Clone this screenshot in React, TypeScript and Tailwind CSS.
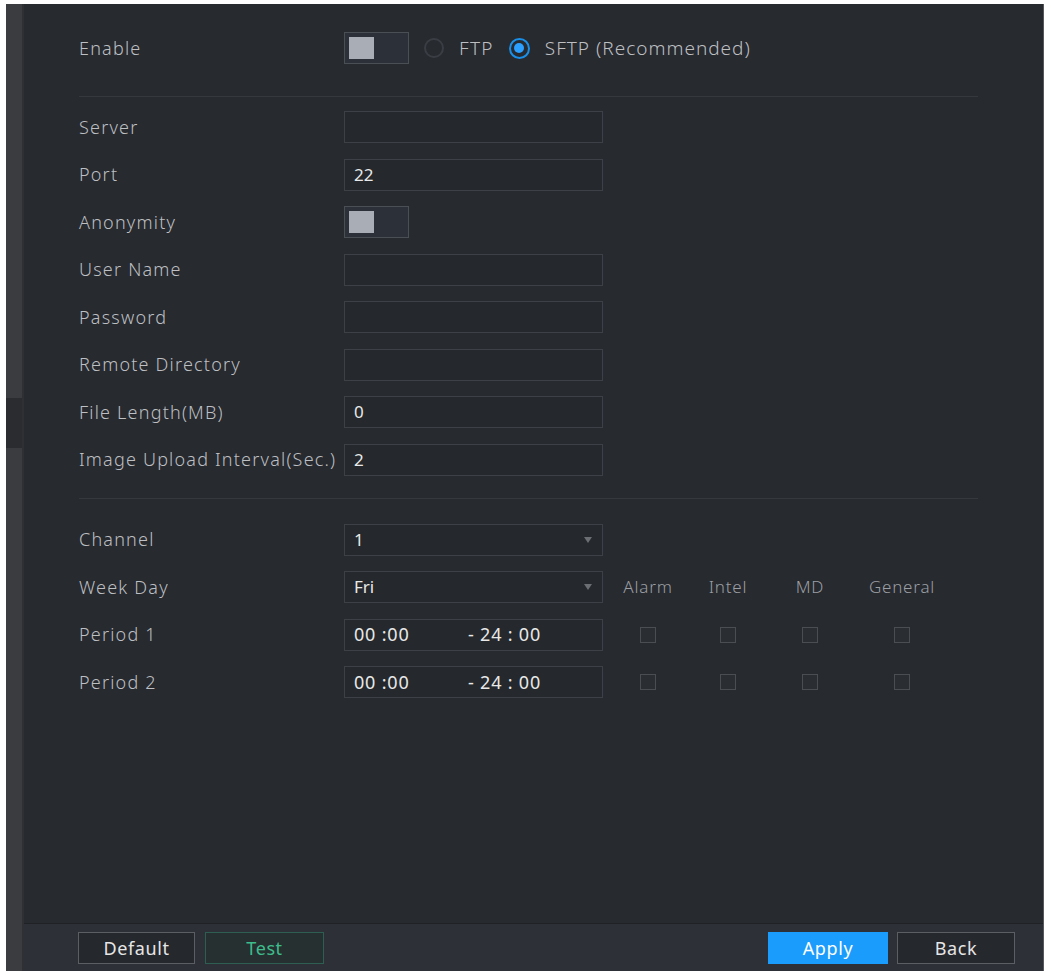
import React, { useState } from 'react';

// SFTP upload settings panel (NVR style, dark theme)

interface FieldRow {
  label: string;
  value?: string;
  kind: 'input' | 'toggle';
}

const FIELDS: FieldRow[] = [
  { label: 'Server', value: '', kind: 'input' },
  { label: 'Port', value: '22', kind: 'input' },
  { label: 'Anonymity', kind: 'toggle' },
  { label: 'User Name', value: '', kind: 'input' },
  { label: 'Password', value: '', kind: 'input' },
  { label: 'Remote Directory', value: '', kind: 'input' },
  { label: 'File Length(MB)', value: '0', kind: 'input' },
  { label: 'Image Upload Interval(Sec.)', value: '2', kind: 'input' },
];

const RECORD_TYPES = ['Alarm', 'Intel', 'MD', 'General'];

const Toggle: React.FC = () => (
  <div className="w-[65px] h-[32px] border border-[#4a4e55] bg-[#2c3038] flex items-center px-[4px]">
    <div className="w-[25px] h-[22px] bg-[#a9adb5]" />
  </div>
);

const TextBox: React.FC<{ value?: string }> = ({ value }) => (
  <div className="w-[259px] h-[32px] border border-[#3d4046] bg-[#25282c] flex items-center px-[9px] text-[17px] text-[#e8e8e8]">
    {value}
  </div>
);

const Select: React.FC<{ value: string }> = ({ value }) => (
  <div className="w-[259px] h-[32px] border border-[#3d4046] bg-[#25282c] flex items-center justify-between pl-[9px] pr-[10px] text-[17px] text-[#e8e8e8]">
    <span>{value}</span>
    <svg width="8" height="6" viewBox="0 0 8 6">
      <path d="M0 0 L8 0 L4 6 Z" fill="#6b6e73" />
    </svg>
  </div>
);

const TimeRange: React.FC = () => (
  <div className="w-[259px] h-[32px] border border-[#3d4046] bg-[#25282c] flex items-center pl-[9px] text-[18px] text-[#e8e8e8] tracking-[0.8px]">
    <span className="w-[114px]">00 :00</span>
    <span>- 24 : 00</span>
  </div>
);

const CheckBox: React.FC = () => (
  <div className="w-[16px] h-[16px] border border-[#4a4d52] bg-[#2a2d32]" />
);

const Label: React.FC<{ children: React.ReactNode }> = ({ children }) => (
  <div className="w-[265px] shrink-0 text-[18px] font-light text-[#bdbfc2] tracking-[1.2px]">{children}</div>
);

export default function App() {
  const [protocol, setProtocol] = useState<'ftp' | 'sftp'>('sftp');

  return (
    <div
      className="w-[1048px] h-[971px] bg-white pt-[4px] pl-[6px] pr-[4px] flex"
      style={{ fontFamily: '"Noto Sans", "Open Sans", sans-serif' }}
    >
      {/* left scroll strip */}
      <div className="w-[18px] shrink-0 bg-[#3a3c40] border-r-2 border-[#2e3034] flex flex-col">
        <div className="h-[394px]" />
        <div className="h-[50px] bg-[#2a2c30]" />
      </div>

      <div className="flex-1 flex flex-col bg-[#272a2f] border-r border-[#55585d]">
        <div className="flex-1 flex flex-col pl-[55px] pr-[65px] pt-[28px]">
          {/* enable + protocol */}
          <div className="flex items-center h-[32px]">
            <Label>Enable</Label>
            <Toggle />
            <button className="flex items-center ml-[15px]" onClick={() => setProtocol('ftp')}>
              <span className="w-[20px] h-[20px] rounded-full border-2 border-[#3a3e44] flex items-center justify-center">
                {protocol === 'ftp' && <span className="w-[10px] h-[10px] rounded-full bg-[#2ba0ff]" />}
              </span>
              <span className="ml-[15px] text-[19px] font-light tracking-[1.3px] text-[#bdbfc2]">FTP</span>
            </button>
            <button className="flex items-center ml-[15px]" onClick={() => setProtocol('sftp')}>
              <span
                className={`w-[21px] h-[21px] rounded-full border-2 flex items-center justify-center ${
                  protocol === 'sftp' ? 'border-[#1a8fe8]' : 'border-[#3a3e44]'
                }`}
              >
                {protocol === 'sftp' && <span className="w-[10px] h-[10px] rounded-full bg-[#2ba0ff]" />}
              </span>
              <span className="ml-[15px] text-[19px] font-light tracking-[1px] text-[#bdbfc2]">SFTP (Recommended)</span>
            </button>
          </div>

          <div className="h-px bg-[#35383d] mt-[32px]" />

          {/* server settings */}
          <div className="flex flex-col gap-[15.5px] mt-[14px]">
            {FIELDS.map(f => (
              <div key={f.label} className="flex items-center h-[32px]">
                <Label>{f.label}</Label>
                {f.kind === 'toggle' ? <Toggle /> : <TextBox value={f.value} />}
              </div>
            ))}
          </div>

          <div className="h-px bg-[#35383d] mt-[22px]" />

          {/* schedule */}
          <div className="flex flex-col gap-[15.5px] mt-[25px]">
            <div className="flex items-center h-[32px]">
              <Label>Channel</Label>
              <Select value="1" />
            </div>
            <div className="flex items-center h-[32px]">
              <Label>Week Day</Label>
              <Select value="Fri" />
              <div className="flex ml-[6px] text-[17px] font-light tracking-[0.8px] text-[#9b9ea3]">
                <div className="w-[78px] text-center">Alarm</div>
                <div className="w-[82px] text-center">Intel</div>
                <div className="w-[82px] text-center">MD</div>
                <div className="w-[102px] text-center">General</div>
              </div>
            </div>
            {['Period 1', 'Period 2'].map(p => (
              <div key={p} className="flex items-center h-[32px]">
                <Label>{p}</Label>
                <TimeRange />
                <div className="flex ml-[6px]">
                  {RECORD_TYPES.map((t, i) => (
                    <div
                      key={t}
                      className={`flex justify-center ${i === 3 ? 'w-[102px]' : i === 0 ? 'w-[78px]' : 'w-[82px]'}`}
                    >
                      <CheckBox />
                    </div>
                  ))}
                </div>
              </div>
            ))}
          </div>
        </div>

        {/* footer buttons */}
        <div className="h-[48px] shrink-0 bg-[#2d3037] border-t border-[#1f2125] flex items-start pt-[8px] pl-[54px] pr-[28px] text-[18px] tracking-[0.6px]">
          <button className="w-[117px] h-[32px] border border-[#5b5e63] bg-[#25282d] text-[#e6e6e6]">Default</button>
          <button className="w-[119px] h-[32px] ml-[10px] border border-[#2d5e51] bg-[#263031] text-[#3ebd8c]">Test</button>
          <div className="flex-1" />
          <button className="w-[120px] h-[32px] bg-[#1a9cfd] text-white">Apply</button>
          <button className="w-[118px] h-[32px] ml-[9px] border border-[#5b5e63] bg-[#25282d] text-[#e6e6e6]">Back</button>
        </div>
      </div>
    </div>
  );
}
